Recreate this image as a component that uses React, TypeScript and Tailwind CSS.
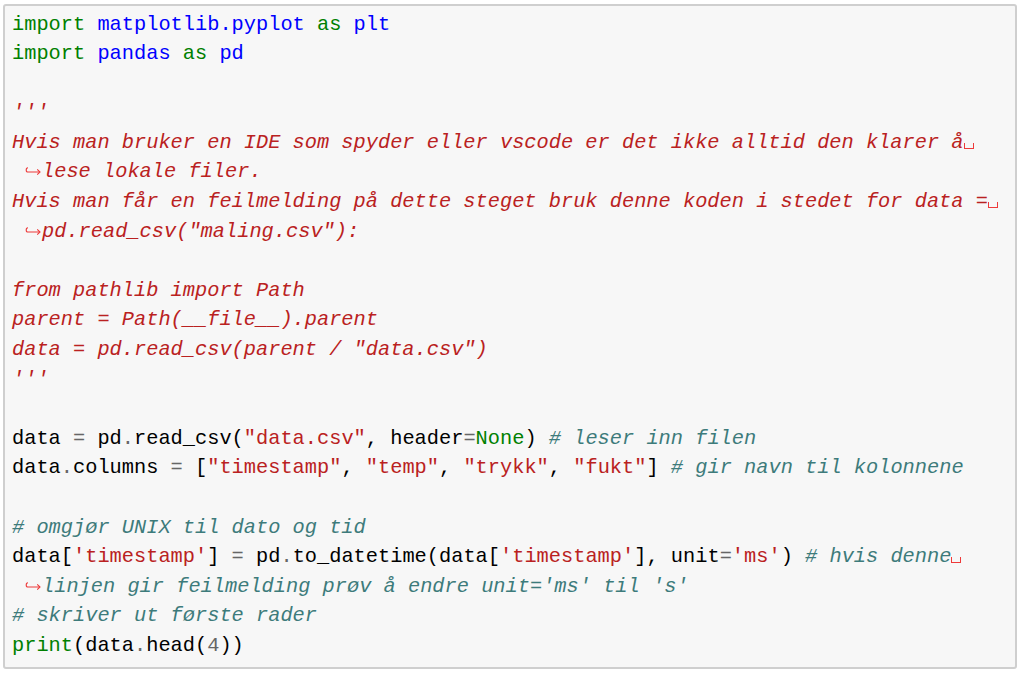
import React from "react";

type Tok = [string, string];

const K = "text-[#008000]";
const N = "text-[#0000ff]";
const S = "text-[#ba2121]";
const SD = "text-[#ba2121] italic";
const C = "text-[#3d7b7b] italic";
const O = "text-[#666666]";
const T = "text-[#000000]";

function Arrow() {
  return (
    <span className="inline-block w-[30px] relative h-[10px]">
      <svg
        className="absolute left-[13px] top-[-1px]"
        width="16"
        height="9"
        viewBox="0 0 16 9"
        fill="none"
        stroke="#ee3a3a"
        strokeWidth="1.1"
      >
        <path d="M3 1.8 C0.6 1.8 0.6 6 3 6 L15 6" />
        <path d="M12.2 3.4 L15 6 L12.2 8.6" />
      </svg>
    </span>
  );
}

function VSpace() {
  return (
    <span className="inline-block w-[12px] h-[10px] relative">
      <span className="absolute left-[0px] top-[5px] w-[10px] h-[6px] border-l border-r border-b border-[#ee3a3a]" />
    </span>
  );
}

type Line = { toks: Tok[]; arrow?: boolean; vs?: boolean };

const lines: Line[] = [
  { toks: [[K, "import"], [T, " "], [N, "matplotlib.pyplot"], [T, " "], [K, "as"], [T, " "], [N, "plt"]] },
  { toks: [[K, "import"], [T, " "], [N, "pandas"], [T, " "], [K, "as"], [T, " "], [N, "pd"]] },
  { toks: [] },
  { toks: [[SD, "'''"]] },
  { toks: [[SD, "Hvis man bruker en IDE som spyder eller vscode er det ikke alltid den klarer å"]], vs: true },
  { toks: [[SD, "lese lokale filer."]], arrow: true },
  { toks: [[SD, "Hvis man får en feilmelding på dette steget bruk denne koden i stedet for data ="]], vs: true },
  { toks: [[SD, 'pd.read_csv("maling.csv"):']], arrow: true },
  { toks: [] },
  { toks: [[SD, "from pathlib import Path"]] },
  { toks: [[SD, "parent = Path(__file__).parent"]] },
  { toks: [[SD, 'data = pd.read_csv(parent / "data.csv")']] },
  { toks: [[SD, "'''"]] },
  { toks: [] },
  {
    toks: [
      [T, "data "], [O, "="], [T, " pd"], [O, "."], [T, "read_csv("], [S, '"data.csv"'], [T, ", header"], [O, "="], [K, "None"], [T, ") "], [C, "# leser inn filen"],
    ],
  },
  {
    toks: [
      [T, "data"], [O, "."], [T, "columns "], [O, "="], [T, " ["], [S, '"timestamp"'], [T, ", "], [S, '"temp"'], [T, ", "], [S, '"trykk"'], [T, ", "], [S, '"fukt"'], [T, "] "], [C, "# gir navn til kolonnene"],
    ],
  },
  { toks: [] },
  { toks: [[C, "# omgjør UNIX til dato og tid"]] },
  {
    toks: [
      [T, "data["], [S, "'timestamp'"], [T, "] "], [O, "="], [T, " pd"], [O, "."], [T, "to_datetime(data["], [S, "'timestamp'"], [T, "], unit"], [O, "="], [S, "'ms'"], [T, ") "], [C, "# hvis denne"],
    ],
    vs: true,
  },
  { toks: [[C, "linjen gir feilmelding prøv å endre unit='ms' til 's'"]], arrow: true },
  { toks: [[C, "# skriver ut første rader"]] },
  { toks: [[K, "print"], [T, "(data"], [O, "."], [T, "head("], [O, "4"], [T, "))"]] },
];

export default function App() {
  return (
    <div className="w-[1024px] h-[676px] bg-white pt-[4px] pl-[3px]">
      <div
        className="w-[1014px] h-[665px] bg-[#f7f7f7] border-2 border-[#cfcfcf] rounded-[3px] pl-[7px] pt-[3.5px] text-[20.33px] leading-[29.6px] whitespace-pre overflow-hidden"
        style={{ fontFamily: '"Liberation Mono", "DejaVu Sans Mono", monospace' }}
      >
        {lines.map((ln, i) => (
          <div key={i} className="h-[29.6px]">
            {ln.arrow ? <Arrow /> : null}
            {ln.toks.map((t, j) => (
              <span key={j} className={t[0]}>
                {t[1]}
              </span>
            ))}
            {ln.vs ? <VSpace /> : null}
          </div>
        ))}
      </div>
    </div>
  );
}
